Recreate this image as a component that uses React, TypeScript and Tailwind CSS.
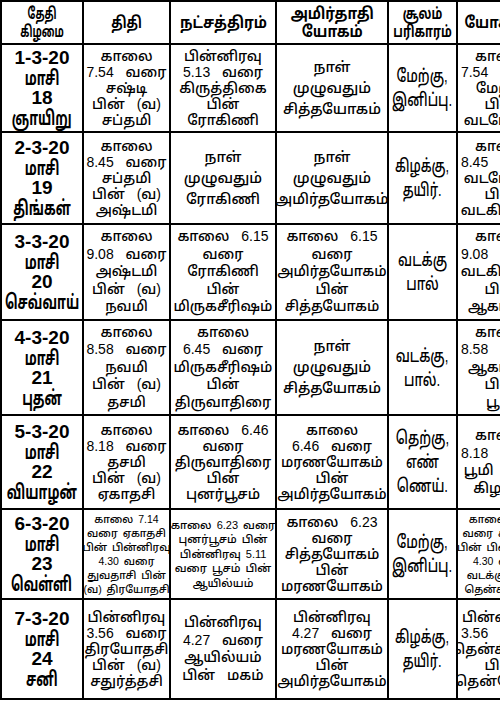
import React from "react";

type Cell = { l: string[]; c?: string; t?: string };

const D = "text-[19px] leading-[20px] font-bold";
const B5 = "text-[14px] leading-[16px] [word-spacing:8px] font-medium";
const B5b = "text-[14px] leading-[17.5px] [word-spacing:8px] font-medium";
const B3 = "text-[14.5px] leading-[21px] font-medium";
const B2 = "text-[18px] leading-[24px] font-medium";
const S6 = "text-[10.5px] leading-[14px] [word-spacing:2px] font-medium";
const S5 = "text-[11px] leading-[14.5px] [word-spacing:2px] font-medium";
const H = "font-bold text-[16px] leading-[18px]";

const header: Cell[] = [
  { l: ["தேதி", "கிழமை"], t: "scale-x-[0.62]", c: H },
  { l: ["திதி"], t: "scale-x-[0.78]", c: H },
  { l: ["நட்சத்திரம்"], t: "scale-x-[0.88]", c: H },
  { l: ["அமிர்தாதி", "யோகம்"], t: "scale-x-[0.88]", c: H },
  { l: ["சூலம்", "பரிகாரம்"], t: "scale-x-[0.72]", c: H },
  { l: ["யோகினி"], t: "scale-x-[0.85]", c: H },
];

const rows: Cell[][] = [
  [
    { l: ["1-3-20", "மாசி", "18", "ஞாயிறு"], c: D },
    { l: ["காலை", "7.54 வரை", "சஷ்டி", "பின் (வ)", "சப்தமி"], c: B5 },
    { l: ["பின்னிரவு", "5.13 வரை", "கிருத்திகை", "பின்", "ரோகிணி"], c: B5 },
    { l: ["நாள்", "முழுவதும்", "சித்தயோகம்"], c: B3 },
    { l: ["மேற்கு,", "இனிப்பு."], c: B2, t: "scale-x-[0.73]" },
    { l: ["காலை", "7.54 வரை", "மேற்கு", "பின்", "வடமேற்கு"], c: B5 },
  ],
  [
    { l: ["2-3-20", "மாசி", "19", "திங்கள்"], c: D },
    { l: ["காலை", "8.45 வரை", "சப்தமி", "பின் (வ)", "அஷ்டமி"], c: B5 },
    { l: ["நாள்", "முழுவதும்", "ரோகிணி"], c: B3 },
    { l: ["நாள்", "முழுவதும்", "அமிர்தயோகம்"], c: B3 },
    { l: ["கிழக்கு,", "தயிர்."], c: B2, t: "scale-x-[0.71]" },
    { l: ["காலை", "8.45 வரை", "வடமேற்கு", "பின்", "வடகிழக்கு"], c: B5 },
  ],
  [
    { l: ["3-3-20", "மாசி", "20", "செவ்வாய்"], c: D },
    { l: ["காலை", "9.08 வரை", "அஷ்டமி", "பின் (வ)", "நவமி"], c: B5b },
    { l: ["காலை 6.15", "வரை", "ரோகிணி", "பின்", "மிருகசீரிஷம்"], c: B5b },
    { l: ["காலை 6.15", "வரை", "அமிர்தயோகம்", "பின்", "சித்தயோகம்"], c: B5b },
    { l: ["வடக்கு", "பால்"], c: B2, t: "scale-x-[0.73]" },
    { l: ["காலை", "9.08 வரை", "வடகிழக்கு", "பின்", "ஆகாயம்"], c: B5b },
  ],
  [
    { l: ["4-3-20", "மாசி", "21", "புதன்"], c: D },
    { l: ["காலை", "8.58 வரை", "நவமி", "பின் (வ)", "தசமி"], c: B5b },
    { l: ["காலை", "6.45 வரை", "மிருகசீரிஷம்", "பின்", "திருவாதிரை"], c: B5b },
    { l: ["நாள்", "முழுவதும்", "சித்தயோகம்"], c: B3 },
    { l: ["வடக்கு,", "பால்."], c: B2, t: "scale-x-[0.73]" },
    { l: ["காலை", "8.58 வரை", "ஆகாயம்", "பின்", "பூமி"], c: B5b },
  ],
  [
    { l: ["5-3-20", "மாசி", "22", "வியாழன்"], c: D },
    { l: ["காலை", "8.18 வரை", "தசமி", "பின் (வ)", "ஏகாதசி"], c: B5 },
    { l: ["காலை 6.46", "வரை", "திருவாதிரை", "பின்", "புனர்பூசம்"], c: B5 },
    { l: ["காலை", "6.46 வரை", "மரணயோகம்", "பின்", "அமிர்தயோகம்"], c: B5 },
    { l: ["தெற்கு,", "எண்", "ணெய்."], c: B2, t: "scale-x-[0.73]" },
    { l: ["காலை", "8.18 வரை", "பூமி பின்", "கிழக்கு"], c: B5b },
  ],
  [
    { l: ["6-3-20", "மாசி", "23", "வெள்ளி"], c: D },
    {
      l: ["காலை 7.14", "வரை ஏகாதசி", "பின் பின்னிரவு", "4.30 வரை", "துவதாசி பின்", "(வ) திரயோதசி"],
      c: S6,
    },
    { l: ["காலை 6.23 வரை", "புனர்பூசம் பின்", "பின்னிரவு 5.11", "வரை பூசம் பின்", "ஆயில்யம்"], c: S5 },
    { l: ["காலை 6.23", "வரை", "சித்தயோகம்", "பின்", "மரணயோகம்"], c: B5 },
    { l: ["மேற்கு,", "இனிப்பு."], c: B2, t: "scale-x-[0.73]" },
    {
      l: ["காலை 7.14", "வரை கிழக்கு", "பின் பின்னிரவு", "4.30 வரை", "வடக்கு பின்", "தென்கிழக்கு"],
      c: S6,
    },
  ],
  [
    { l: ["7-3-20", "மாசி", "24", "சனி"], c: D },
    { l: ["பின்னிரவு", "3.56 வரை", "திரயோதசி", "பின் (வ)", "சதுர்த்தசி"], c: B5 },
    { l: ["பின்னிரவு", "4.27 வரை", "ஆயில்யம்", "பின் மகம்"], c: B5b },
    { l: ["பின்னிரவு", "4.27 வரை", "மரணயோகம்", "பின்", "அமிர்தயோகம்"], c: B5 },
    { l: ["கிழக்கு,", "தயிர்."], c: B2, t: "scale-x-[0.71]" },
    { l: ["பின்னிரவு", "3.56 வரை", "தென்கிழக்கு", "பின்", "தென்மேற்கு"], c: B5 },
  ],
];

const tamil = /[\u0B80-\u0BFF]/;

function CellView({ cell, date }: { cell: Cell; date?: boolean }) {
  return (
    <div
      className={
        "bg-white flex flex-col items-center justify-center text-center overflow-hidden " +
        (cell.c ?? "")
      }
    >
      <div className={"flex flex-col items-center " + (cell.t ?? "")}>
        {cell.l.map((t, i) => (
          <div
            key={i}
            className={
              "whitespace-nowrap " + (date && tamil.test(t) ? "scale-x-[0.64] text-[20px]" : "")
            }
          >
            {t}
          </div>
        ))}
      </div>
    </div>
  );
}

export default function App() {
  return (
    <div className="w-[500px] h-[702px] overflow-hidden bg-white text-black font-['Liberation_Sans','Noto_Sans_Tamil','Noto_Sans',sans-serif]">
      <div className="w-max grid grid-cols-[80px_85px_104px_110px_67px_86px] grid-rows-[41px_86px_90px_94px_93px_92px_88px_98px] gap-[2px] p-[2px] bg-black">
        {header.map((h, i) => (
          <CellView key={"h" + i} cell={h} />
        ))}
        {rows.map((r, ri) =>
          r.map((c, ci) => <CellView key={ri + "-" + ci} cell={c} date={ci === 0} />)
        )}
      </div>
    </div>
  );
}
